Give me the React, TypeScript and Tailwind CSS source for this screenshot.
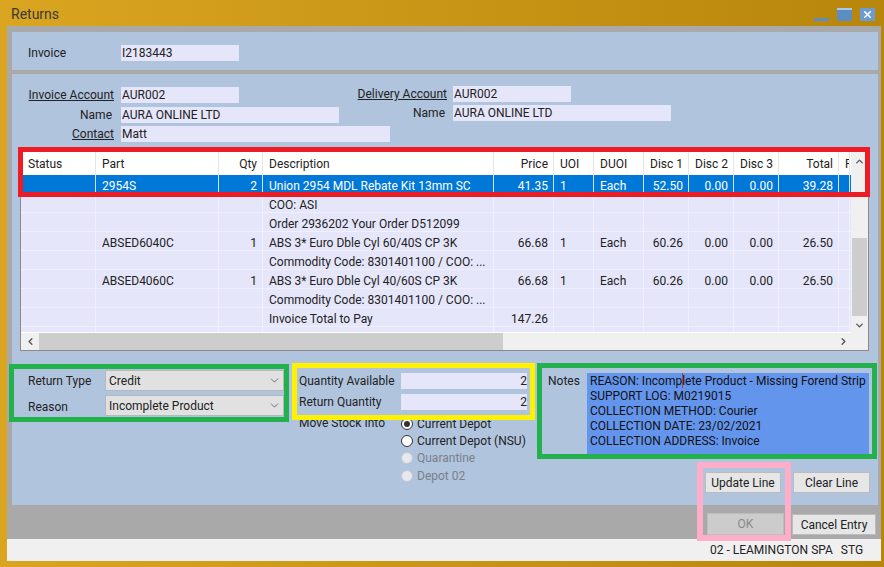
import { ChevronDown, ChevronLeft, ChevronRight, ChevronUp, X } from "lucide-react";

const headers = [
  { label: "Status", right: false },
  { label: "Part", right: false },
  { label: "Qty", right: true },
  { label: "Description", right: false },
  { label: "Price", right: true },
  { label: "UOI", right: false },
  { label: "DUOI", right: false },
  { label: "Disc 1", right: true },
  { label: "Disc 2", right: true },
  { label: "Disc 3", right: true },
  { label: "Total", right: true },
  { label: "R", right: false },
];

const rows = [
  ["", "2954S", "2", "Union 2954 MDL Rebate Kit 13mm SC", "41.35", "1", "Each", "52.50", "0.00", "0.00", "39.28", ""],
  ["", "", "", "COO: ASI", "", "", "", "", "", "", "", ""],
  ["", "", "", "Order 2936202 Your Order D512099", "", "", "", "", "", "", "", ""],
  ["", "ABSED6040C", "1", "ABS 3* Euro Dble Cyl 60/40S CP 3K", "66.68", "1", "Each", "60.26", "0.00", "0.00", "26.50", ""],
  ["", "", "", "Commodity Code: 8301401100 / COO: ...", "", "", "", "", "", "", "", ""],
  ["", "ABSED4060C", "1", "ABS 3* Euro Dble Cyl 40/60S CP 3K", "66.68", "1", "Each", "60.26", "0.00", "0.00", "26.50", ""],
  ["", "", "", "Commodity Code: 8301401100 / COO: ...", "", "", "", "", "", "", "", ""],
  ["", "", "", "Invoice Total to Pay", "147.26", "", "", "", "", "", "", ""],
  ["", "", "", "", "", "", "", "", "", "", "", ""],
];

const cols = "grid grid-cols-[75px_123px_44px_231px_60px_40px_50px_45px_45px_45px_60px_11px]";

function Field({ w, value, right }: { w: string; value: string; right?: boolean }) {
  return (
    <div className={`${w} h-4 shrink-0 bg-[#e6e6fa] leading-4 ${right ? "text-right" : "pl-px"}`}>{value}</div>
  );
}

function Select({ value }: { value: string }) {
  return (
    <div className="h-[21px] flex items-center justify-between bg-[#e1e1e1] border border-[#b4b8bd] pl-[3px] pr-[2px]">
      <span>{value}</span>
      <ChevronDown size={13} strokeWidth={1.2} className="text-[#333]" />
    </div>
  );
}

function Radio({ label, checked, disabled }: { label: string; checked?: boolean; disabled?: boolean }) {
  return (
    <div className={`h-[17.4px] flex items-center gap-1 ${disabled ? "text-[#7a7f88]" : ""}`}>
      <span
        className={`w-3 h-3 rounded-full border flex items-center justify-center ${
          disabled ? "border-[#c4c8d0] bg-[#e8e8ee]" : "border-[#333] bg-white"
        }`}
      >
        {checked && <span className="w-1.5 h-1.5 rounded-full bg-[#333]" />}
      </span>
      {label}
    </div>
  );
}

function Button({ label, w, disabled }: { label: string; w: string; disabled?: boolean }) {
  return (
    <div
      className={`${w} flex items-center justify-center border ${
        disabled ? "bg-[#cccccc] border-[#bdbdbd] text-[#8a8a8a]" : "bg-[#e6e6e6] border-[#bcbcbc]"
      }`}
    >
      {label}
    </div>
  );
}

export default function App() {
  return (
    <div
      className="relative w-[884px] h-[567px] overflow-hidden bg-gradient-to-r from-[#daa520] to-[#b8860b] text-[12px] leading-4 whitespace-nowrap text-[#222]"
      style={{ fontFamily: 'Roboto, "Liberation Sans", sans-serif' }}
    >
      <header className="h-[26px] flex items-start pl-[11px]">
        <span className="text-[14px] leading-[28px] text-[#3a3a3a]">Returns</span>
        <div className="ml-auto mr-[9px] mt-2 flex items-end gap-2">
          <div className="w-[15px] h-[3px] bg-[#5b8fc4]" />
          <div className="w-[15px] h-[13px] bg-[#5b8fc4] border-t-2 border-t-[#a9c8e6]" />
          <div className="w-[15px] h-[13px] bg-[#6b9bd0] flex items-center justify-center">
            <X size={11} strokeWidth={3.5} className="text-white" />
          </div>
        </div>
      </header>

      <div className="ml-[7px] mr-[3px] bg-[#a9a9a9] pt-1.5 flex flex-col">
        <section className="ml-[5px] mr-[3px] h-[38px] bg-[#b0c4de] pt-[13px] pl-4 flex">
          <span className="w-[93px]">Invoice</span>
          <Field w="w-[118px]" value="I2183443" />
        </section>

        <section className="mt-1 ml-[5px] mr-[3px] h-[431px] bg-[#b0c4de] pt-[13px] flex flex-col">
          <div className="flex">
            <div className="w-[345px] flex flex-col gap-1">
              <div className="flex gap-[7px]">
                <span className="w-[102px] text-right underline">Invoice Account</span>
                <Field w="w-[118px]" value="AUR002" />
              </div>
              <div className="flex gap-[7px]">
                <span className="w-[100px] mr-[2px] text-right">Name</span>
                <Field w="w-[218px]" value="AURA ONLINE LTD" />
              </div>
            </div>
            <div className="-mt-px flex flex-col gap-[3px]">
              <div className="flex gap-1.5">
                <span className="w-[90px] text-right underline">Delivery Account</span>
                <Field w="w-[118px]" value="AUR002" />
              </div>
              <div className="flex gap-1.5">
                <span className="w-[88px] mr-[2px] text-right">Name</span>
                <Field w="w-[218px]" value="AURA ONLINE LTD" />
              </div>
            </div>
          </div>
          <div className="mt-[3px] flex gap-[7px]">
            <span className="w-[102px] text-right underline">Contact</span>
            <Field w="w-[269px]" value="Matt" />
          </div>

          <div className="mt-1.5 ml-2 w-[849px] h-[203px] shrink-0 border border-[#8a8a8a] bg-[#f0f0f0] flex flex-col">
            <div className="h-[184px] flex">
              <div className="w-[830px] overflow-hidden bg-[#e6e6fa] border-b border-white">
                <div className={`${cols} h-[26px] bg-white`}>
                  {headers.map((h, j) => (
                    <div
                      key={h.label}
                      className={`border-r border-[#e5e5e5] leading-[30px] overflow-hidden ${
                        h.right ? "pr-[5px] text-right" : j === 0 ? "pl-[7px]" : "pl-1.5"
                      }`}
                    >
                      {h.label}
                    </div>
                  ))}
                </div>
                {rows.map((row, i) => (
                  <div
                    key={i}
                    className={`${cols} h-[19px] border-b ${
                      i === 0 ? "bg-[#0078d7] text-white border-[#0078d7]" : "border-[#f0f0fc]"
                    }`}
                  >
                    {row.map((cell, j) => (
                      <div
                        key={j}
                        className={`leading-[23px] overflow-hidden border-r ${
                          i === 0 ? "border-[#cfe4f7]" : "border-[#f0f0fc]"
                        } ${headers[j].right ? "pr-[5px] text-right" : "pl-1.5"}`}
                      >
                        {cell}
                      </div>
                    ))}
                  </div>
                ))}
              </div>
              <div className="flex-1 flex flex-col items-center text-[#555] bg-[#f0f0f0]">
                <ChevronUp size={11} strokeWidth={3} className="mt-[7px]" />
                <div className="mt-[71px] w-[15px] h-[78px] shrink-0 bg-[#cdcdcd]" />
                <ChevronDown size={11} strokeWidth={3} className="mt-1" />
              </div>
            </div>
            <div className="h-[17px] flex items-center text-[#555]">
              <div className="w-[18px] flex justify-center">
                <ChevronLeft size={11} strokeWidth={3} />
              </div>
              <div className="w-[464px] h-[17px] bg-[#cdcdcd]" />
              <div className="ml-auto mr-[19px]">
                <ChevronRight size={11} strokeWidth={3} />
              </div>
            </div>
          </div>

          <div className="mt-[19px] ml-4 flex">
            <div className="w-[256px] h-fit grid grid-cols-[77px_179px] gap-y-1 items-center">
              <span>Return Type</span>
              <Select value="Credit" />
              <span className="pt-0.5">Reason</span>
              <Select value="Incomplete Product" />
            </div>
            <div className="ml-[15px] w-[228px] pt-[3px] flex flex-col">
              <div className="flex">
                <span className="w-[102px]">Quantity Available</span>
                <Field w="w-[126px]" value="2" right />
              </div>
              <div className="mt-[5px] flex">
                <span className="w-[102px]">Return Quantity</span>
                <Field w="w-[126px]" value="2" right />
              </div>
              <div className="mt-[5px] flex">
                <span className="w-[102px]">Move Stock Into</span>
                <div className="flex flex-col">
                  <Radio label="Current Depot" checked />
                  <Radio label="Current Depot (NSU)" />
                  <Radio label="Quarantine" disabled />
                  <Radio label="Depot 02" disabled />
                </div>
              </div>
            </div>
            <div className="ml-[21px] w-[322px] pt-[3px] flex flex-col">
              <div className="flex">
                <span className="w-[39px]">Notes</span>
                <div className="relative w-[282px] h-[81px] bg-[#6495ed] pl-[3px] pt-px leading-[15px] text-[#111]">
                  <div>REASON: Incomplete Product - Missing Forend Strip</div>
                  <div>SUPPORT LOG: M0219015</div>
                  <div>COLLECTION METHOD: Courier</div>
                  <div>COLLECTION DATE: 23/02/2021</div>
                  <div>COLLECTION ADDRESS: Invoice</div>
                  <div className="absolute left-[95px] top-0 w-px h-[15px] bg-[#c0392b]" />
                </div>
              </div>
              <div className="mt-[18px] ml-[157px] flex gap-3">
                <Button label="Update Line" w="w-[76px] h-[21px]" />
                <Button label="Clear Line" w="w-[77px] h-[21px]" />
              </div>
            </div>
          </div>
        </section>

        <div className="h-[34px] pt-2 pr-[5px] flex justify-end gap-2 items-start">
          <Button label="OK" w="w-[77px] h-[22px]" disabled />
          <Button label="Cancel Entry" w="w-[84px] h-[21px] mt-px" />
        </div>

        <footer className="h-[22px] pb-px bg-[#f0f0f0] flex items-center pl-[703px]">
          <span>02 - LEAMINGTON SPA</span>
          <span className="ml-2">STG</span>
        </footer>
      </div>

      {/* coloured markup boxes drawn over the screen */}
      <div className="absolute left-[18px] top-[147px] w-[852px] h-[50px] border-[5px] border-[#ed1c24]" />
      <div className="absolute left-[9px] top-[364px] w-[280px] h-[58px] border-[5px] border-[#22b14c]" />
      <div className="absolute left-[292px] top-[363px] w-[243px] h-[57px] border-[5px] border-[#fff200]" />
      <div className="absolute left-[537px] top-[363px] w-[340px] h-[96px] border-[5px] border-[#22b14c]" />
      <div className="absolute left-[697px] top-[462px] w-[94px] h-[79px] border-[6px] border-[#ffaec9]" />
    </div>
  );
}
